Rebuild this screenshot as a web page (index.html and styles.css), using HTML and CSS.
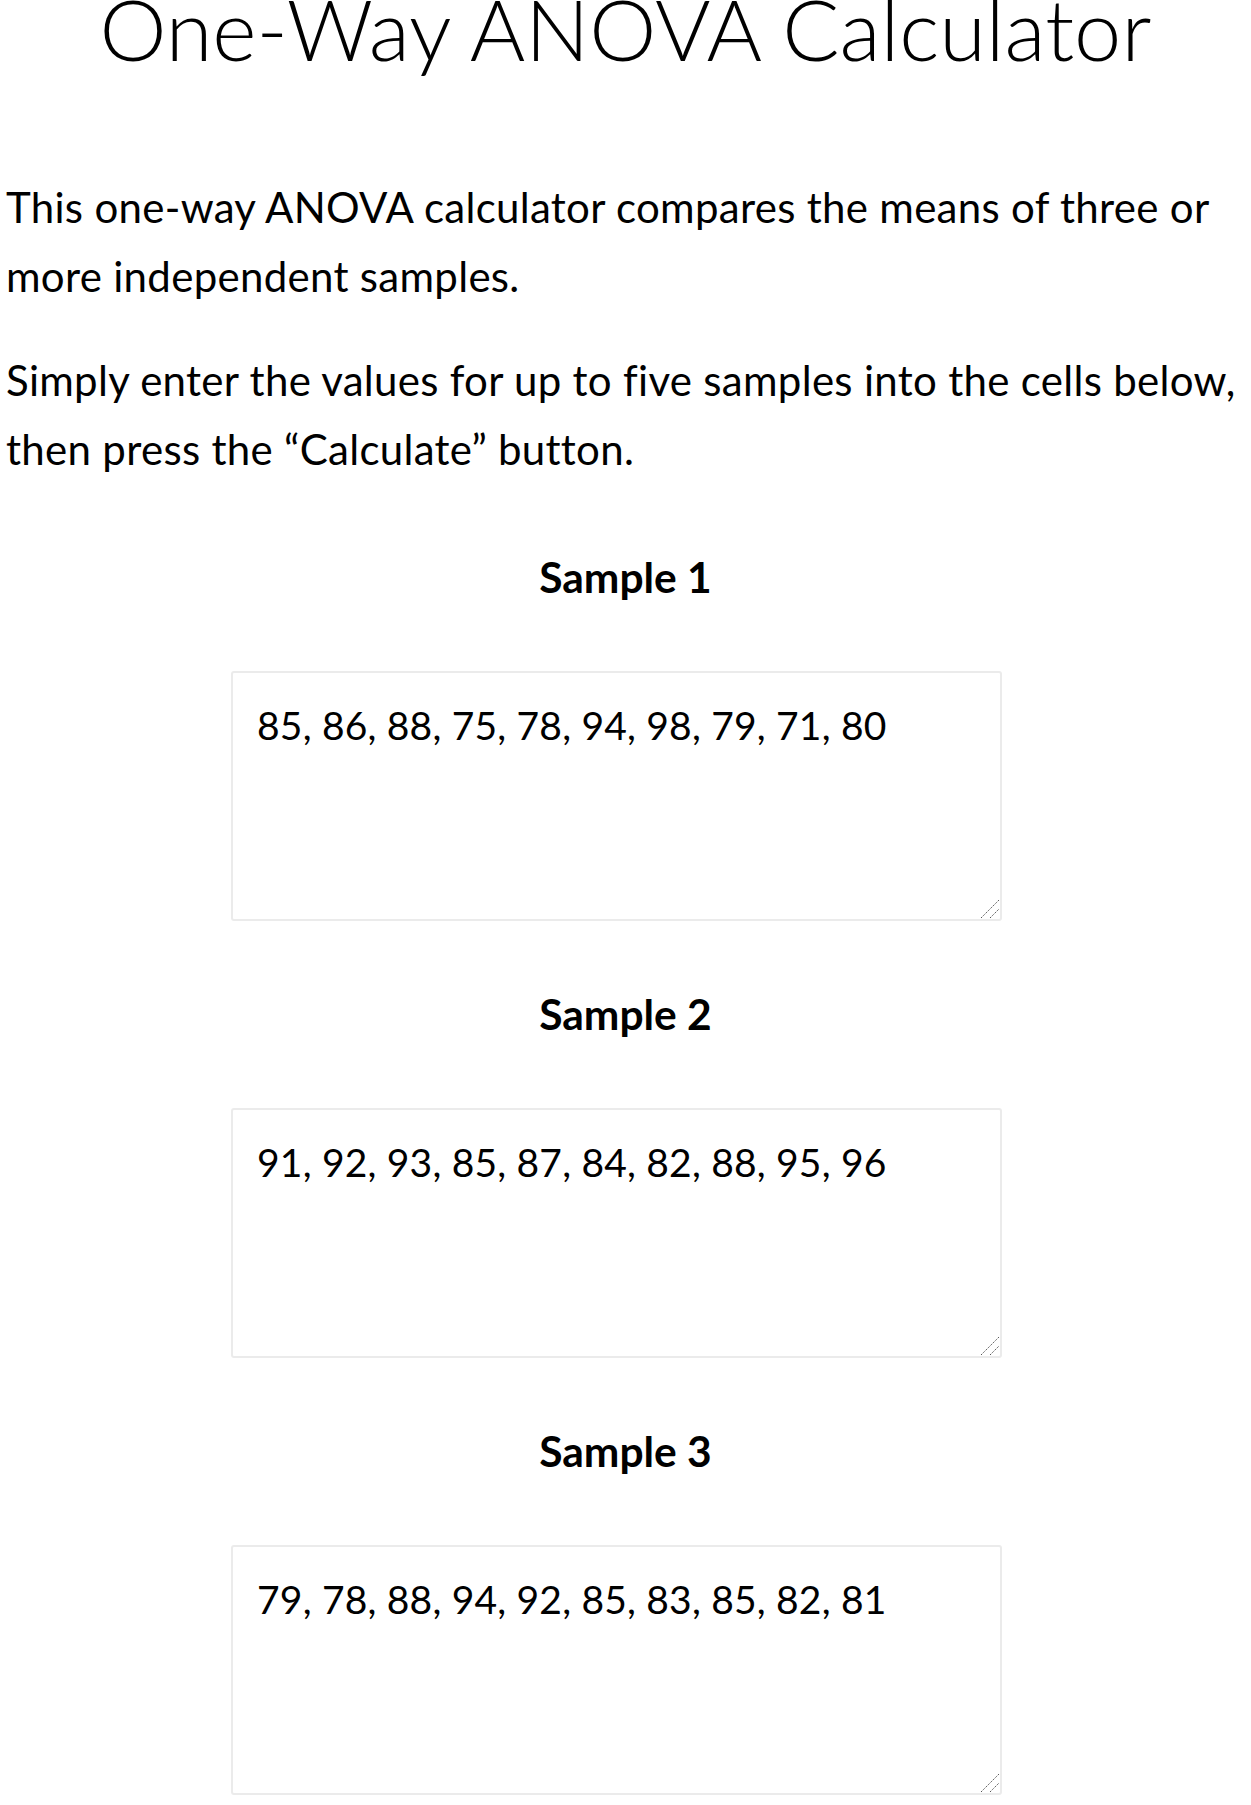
FILE: index.html
```html
<!DOCTYPE html>
<html lang="en">
<head>
<meta charset="utf-8">
<title>One-Way ANOVA Calculator</title>
<link rel="stylesheet" href="styles.css">
</head>
<body>
<main class="page">
  <h1 class="title">One-Way ANOVA Calculator</h1>
  <p class="intro">This one-way ANOVA calculator compares the means of three or more independent samples.</p>
  <p class="intro second">Simply enter the values for up to five samples into the cells below, then press the “Calculate” button.</p>

  <section class="sample">
    <h2 class="sample-title">Sample 1</h2>
    <div class="field">
      <textarea class="sample-input">85, 86, 88, 75, 78, 94, 98, 79, 71, 80</textarea>
      <svg class="grip" width="24" height="24" viewBox="0 0 24 24" aria-hidden="true"><path d="M3 21 L21 3 M12 21 L21 12"/></svg>
    </div>
  </section>

  <section class="sample">
    <h2 class="sample-title">Sample 2</h2>
    <div class="field">
      <textarea class="sample-input">91, 92, 93, 85, 87, 84, 82, 88, 95, 96</textarea>
      <svg class="grip" width="24" height="24" viewBox="0 0 24 24" aria-hidden="true"><path d="M3 21 L21 3 M12 21 L21 12"/></svg>
    </div>
  </section>

  <section class="sample">
    <h2 class="sample-title">Sample 3</h2>
    <div class="field">
      <textarea class="sample-input">79, 78, 88, 94, 92, 85, 83, 85, 82, 81</textarea>
      <svg class="grip" width="24" height="24" viewBox="0 0 24 24" aria-hidden="true"><path d="M3 21 L21 3 M12 21 L21 12"/></svg>
    </div>
  </section>
</main>
</body>
</html>
```

FILE: styles.css
```css
html, body {
  margin: 0;
  padding: 0;
  background: #ffffff;
}

body {
  font-family: Lato, "Open Sans", "Liberation Sans", sans-serif;
  color: #000000;
  overflow: hidden;
}

.page {
  padding: 0 6px;
}

.title {
  margin: -12px 0 0 0;
  font-size: 84.8px;
  line-height: 80px;
  font-weight: 300;
  text-align: center;
}

.intro {
  margin: 105px 0 0 0;
  font-size: 42px;
  line-height: 69px;
  letter-spacing: 0.3px;
  font-weight: 400;
}

.intro.second {
  margin-top: 35px;
}

.sample {
  display: flex;
  flex-direction: column;
}

.sample-title {
  margin: 69px 0 70px 0;
  font-size: 42.5px;
  line-height: 48px;
  font-weight: 700;
  text-align: center;
}

.field {
  position: relative;
  width: 771px;
  height: 250px;
  margin-left: 225px;
}

.sample-input {
  display: block;
  box-sizing: border-box;
  width: 100%;
  height: 100%;
  margin: 0;
  padding: 25px 24px;
  border: 2px solid #ebebeb;
  border-radius: 3px;
  font-family: Lato, "Open Sans", "Liberation Sans", sans-serif;
  font-size: 39px;
  line-height: 54px;
  letter-spacing: 0.2px;
  color: #000000;
  background: #ffffff;
  resize: none;
  outline: none;
}

.grip {
  position: absolute;
  right: 0;
  bottom: 0;
  pointer-events: none;
}

.grip path {
  fill: none;
  stroke: #555555;
  stroke-width: 1;
  stroke-dasharray: 1.4 1;
}
```
